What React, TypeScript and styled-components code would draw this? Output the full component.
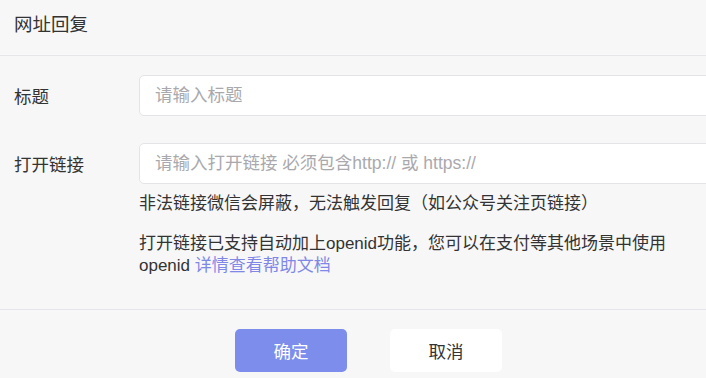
import React from 'react'
import styled, { createGlobalStyle } from 'styled-components'

const GlobalStyle = createGlobalStyle`
  html, body {
    margin: 0;
    padding: 0;
    background: #f7f7f8;
  }
  body {
    font-family: "Liberation Sans", "Noto Sans CJK SC", sans-serif;
    color: #333;
  }
`

const Page = styled.div`
  width: 706px;
  height: 378px;
  overflow: hidden;
  background: #f7f7f8;
`

const Header = styled.div`
  height: 56px;
  padding: 0 0 10px 14px;
  display: flex;
  align-items: center;
  font-size: 18.5px;
  color: #333;
  border-bottom: 1px solid #e6e5e9;
  box-sizing: border-box;
`

const Body = styled.div`
  padding: 19px 0 32px 14px;
  display: flex;
  flex-direction: column;
  gap: 27px;
  border-bottom: 1px solid #e6e5e9;
`

const Row = styled.div`
  display: flex;
  align-items: flex-start;
`

const Label = styled.div`
  width: 125px;
  flex-shrink: 0;
  padding-top: 9px;
  line-height: 26px;
  font-size: 17.5px;
  color: #333;
`

const Field = styled.div`
  flex: 1;
  min-width: 0;
`

const Input = styled.input`
  display: block;
  width: 640px;
  height: 41px;
  box-sizing: border-box;
  border: 1px solid #e4e4e8;
  border-radius: 5px;
  background: #fff;
  padding: 0 15px;
  font-family: inherit;
  font-size: 17.5px;
  color: #333;
  outline: none;

  &::placeholder {
    color: #a9a9ad;
  }
`

const Hint = styled.p<{ $gap?: number }>`
  margin: ${p => p.$gap ?? 0}px 0 0;
  font-size: 17px;
  line-height: ${p => (p.$gap && p.$gap > 10 ? 22 : 24)}px;
  color: #333;
  padding-right: 8px;
`

const Link = styled.a`
  color: #7f88e6;
  text-decoration: none;
  cursor: pointer;
`

const Footer = styled.div`
  display: flex;
  justify-content: center;
  gap: 43px;
  padding: 19px 0 0 31px;
`

const Button = styled.button<{ $primary?: boolean }>`
  width: 112px;
  height: 43px;
  border: none;
  border-radius: 5px;
  font-family: inherit;
  font-size: 17.5px;
  background: ${p => (p.$primary ? '#7c8dec' : '#fff')};
  color: ${p => (p.$primary ? '#fff' : '#333')};
  cursor: pointer;
`

export default function App() {
  return (
    <Page>
      <GlobalStyle />
      <Header>网址回复</Header>
      <Body>
        <Row>
          <Label>标题</Label>
          <Field>
            <Input placeholder="请输入标题" />
          </Field>
        </Row>
        <Row>
          <Label>打开链接</Label>
          <Field>
            <Input placeholder="请输入打开链接 必须包含http:// 或 https://" />
            <Hint $gap={8}>非法链接微信会屏蔽，无法触发回复（如公众号关注页链接）</Hint>
            <Hint $gap={17}>
              打开链接已支持自动加上openid功能，您可以在支付等其他场景中使用openid <Link>详情查看帮助文档</Link>
            </Hint>
          </Field>
        </Row>
      </Body>
      <Footer>
        <Button $primary>确定</Button>
        <Button>取消</Button>
      </Footer>
    </Page>
  )
}
